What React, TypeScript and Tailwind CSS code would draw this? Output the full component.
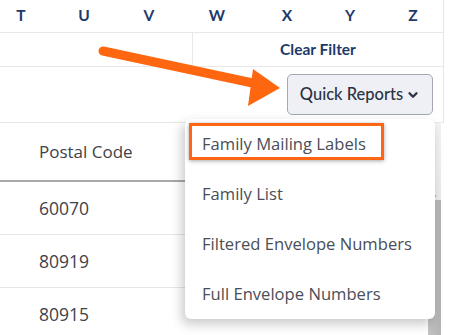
import { ChevronDown } from "lucide-react";

const letters = [
    { l: "T", ml: "ml-[11px]" },
    { l: "U", ml: "ml-[43px]" },
    { l: "V", ml: "ml-[45px]" },
    { l: "W", ml: "ml-[48px]" },
    { l: "X", ml: "ml-[50px]" },
    { l: "Y", ml: "ml-[43px]" },
    { l: "Z", ml: "ml-[43px]" },
];

const codes = ["60070", "80919", "80915"];

const reports = [
    "Family Mailing Labels",
    "Family List",
    "Filtered Envelope Numbers",
    "Full Envelope Numbers",
];

export default function App() {
    return (
        <div className="relative w-[454px] h-[335px] overflow-hidden bg-white font-['Open_Sans',sans-serif]">
            <div className="w-[444px] border-r border-[#e6e6e6]">
                {/* alphabet filter */}
                <div className="flex items-center h-[33px] border-b border-[#e8e8e8] font-['Lato',sans-serif] font-bold text-[15.5px] text-[#1d3a6b]">
                    {letters.map((x) => (
                        <span key={x.l} className={`w-[20px] text-center ${x.ml}`}>
                            {x.l}
                        </span>
                    ))}
                </div>
                <div className="flex h-[34px] border-b border-[#e8e8e8]">
                    <div className="w-[193px] border-r border-[#e8e8e8]" />
                    <div className="flex-1 flex items-center justify-center font-['Lato',sans-serif] font-bold text-[15.5px] text-[#1d3a6b]">
                        Clear Filter
                    </div>
                </div>
                <div className="flex items-center justify-end h-[56px] pr-[10px] border-b border-[#e8e8e8]">
                    <button className="flex items-center gap-[3px] h-[41px] w-[146px] justify-center rounded-[5px] border border-[#a3a7b0] bg-[#eef0f5] text-[16.5px] font-medium text-[#2c3342] font-['Lato',sans-serif]">
                        Quick Reports
                        <ChevronDown size={14} strokeWidth={4} />
                    </button>
                </div>
            </div>

            {/* table */}
            <div className="flex">
                <div className="w-[428px] text-[17px] text-[#3f4249]">
                    <div className="h-[59px] flex items-center pl-[39px] border-b-2 border-[#a9a9a9]">
                        Postal Code
                    </div>
                    {codes.map((c) => (
                        <div
                            key={c}
                            className="h-[53px] flex items-center pl-[39px] border-b border-[#e6e6e6] text-[17.5px]"
                        >
                            {c}
                        </div>
                    ))}
                </div>
                <div className="w-[13px] flex flex-col">
                    <div className="h-[67px] bg-gradient-to-b from-[#f4f4f4] to-[#ececec]" />
                    <div className="h-[10px] flex items-center justify-center bg-[#ececec] text-[6px] text-[#a0a0a0]">
                        ▲
                    </div>
                    <div className="flex-1 bg-gradient-to-r from-[#c3c3c3] to-[#b3b3b3]" />
                </div>
            </div>

            {/* dropdown menu */}
            <div className="absolute left-[185px] top-[119px] w-[250px] rounded-[6px] bg-white shadow-[-3px_5px_12px_rgba(0,0,0,0.22)] text-[16.6px] text-[#4a4e56]">
                {reports.map((r, i) => (
                    <div key={r} className="relative h-[50px] flex items-center pl-[17px]">
                        {i === 0 && (
                            <div className="absolute left-[4px] top-[4px] w-[195px] h-[37px] border-[3px] border-[#ff6512] shadow-[0_1px_4px_rgba(0,0,0,0.35)]" />
                        )}
                        {r}
                    </div>
                ))}
            </div>

            {/* annotation arrow */}
            <svg
                className="absolute left-0 top-0 pointer-events-none"
                width="454"
                height="335"
                viewBox="0 0 454 335"
            >
                <line
                    x1="103"
                    y1="51"
                    x2="262"
                    y2="85"
                    stroke="#ff6610"
                    strokeWidth="9"
                    strokeLinecap="round"
                />
                <polygon points="253,69 280,88 248,106" fill="#ff6610" />
            </svg>
        </div>
    );
}
